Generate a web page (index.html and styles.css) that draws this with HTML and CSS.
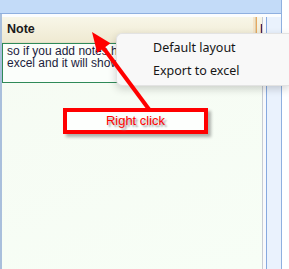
FILE: index.html
```html
<!DOCTYPE html>
<html lang="en">
<head>
  <meta charset="UTF-8" />
  <title>Notes grid - right click</title>
  <link rel="stylesheet" href="styles.css">
</head>
<body>

  <div class="window">
    <div class="pane">
      <div class="topbar"></div>
      <div class="content">
        <div class="grid">
          <div class="header">
            <div class="col note">Note</div>
            <div class="col next">I</div>
          </div>
          <div class="row">
            <div class="cell">so if you add notes here they will be exported to<br>excel and it will show up in the sheet</div>
          </div>
        </div>
        <div class="gutter"></div>
        <div class="side"></div>
      </div>
    </div>
    <div class="edge"></div>
  </div>

  <!-- context menu -->
  <div class="menu">
    <div class="item">Default layout</div>
    <div class="item">Export to excel</div>
  </div>

  <!-- annotation -->
  <svg class="arrow" width="289" height="269" viewBox="0 0 289 269">
    <line x1="151" y1="112" x2="102" y2="46" stroke="#ff0000" stroke-width="4" />
    <polygon points="92,32 110.5,43.2 97.2,53" fill="#ff0000" />
  </svg>

  <div class="callout">Right click</div>

</body>
</html>
```

FILE: styles.css
```css
html {
  overflow: hidden;
}

body {
  margin: 0;
  width: 289px;
  height: 269px;
  overflow: hidden;
  position: relative;
  background: #ffffff;
  font-family: 'Liberation Sans', Arial, sans-serif;
}

.window {
  display: flex;
  height: 269px;
}

.pane {
  width: 282px;
  display: flex;
  flex-direction: column;
  border-right: 1px solid #8fb0e0;
  box-sizing: border-box;
}

.topbar {
  height: 13px;
  background: #c3dbf8;
  border-bottom: 1px solid #8fb0e0;
}

.content {
  flex: 1;
  display: flex;
  border-left: 2px solid #a9bfdc;
  padding-top: 3px;
  background: #fbfdff;
}

.grid {
  width: 260px;
  background: linear-gradient(160deg, #f6fbf3, #f7fef6);
}

.header {
  display: flex;
  height: 25px;
  background: linear-gradient(#f8f6e8, #efead2);
  border-bottom: 1px solid #e4dfc6;
}

.col {
  font-weight: bold;
  font-size: 12.5px;
  line-height: 25px;
  color: #1a1a1a;
}

.note {
  width: 248px;
  padding-left: 5px;
  border-right: 1px solid #d9cfae;
  box-shadow: inset -2px 0 0 #f6e4c8;
}

.next {
  flex: 1;
  padding-left: 3px;
  border-left: 1px solid #e8a860;
  color: #1e1e5a;
  overflow: hidden;
}

.row {
  display: flex;
}

.cell {
  width: 251px;
  height: 37px;
  border: 1px solid #2f8a58;
  padding: 1px 0 0 4px;
  font-size: 12px;
  line-height: 12px;
  color: #1c1c3c;
  white-space: nowrap;
  overflow: hidden;
  background: #fbfefb;
}

.gutter {
  width: 3px;
  border-left: 1px solid #c7ccd3;
  background: #f8f9fb;
}

.side {
  flex: 1;
  background: #eaf2fd;
  border-left: 1px solid #86a9df;
}

.edge {
  flex: 1;
  background: #ffffff;
}

.menu {
  position: absolute;
  left: 116px;
  top: 33px;
  width: 172px;
  padding: 3px 0 2px;
  background: #f8f8f8;
  border: 1px solid #e3e3e3;
  border-right: none;
  border-radius: 6px 0 0 6px;
  box-shadow: 0 3px 8px rgba(0, 0, 0, 0.18);
  font-family: 'Noto Sans', sans-serif;
  font-size: 12.5px;
  color: #161616;
}

.item {
  height: 23px;
  line-height: 22px;
  padding-left: 36px;
}

.arrow {
  position: absolute;
  left: 0;
  top: 0;
}

.callout {
  position: absolute;
  left: 63px;
  top: 108px;
  width: 137px;
  height: 18px;
  border: 4px solid #ff0000;
  background: #fdfffd;
  box-shadow: 3px 3px 3px rgba(0, 0, 0, 0.3);
  text-align: center;
  font-size: 13px;
  line-height: 18px;
  color: #ff0000;
  text-shadow: 2px 2px 2px #9a9a9a;
}
```
